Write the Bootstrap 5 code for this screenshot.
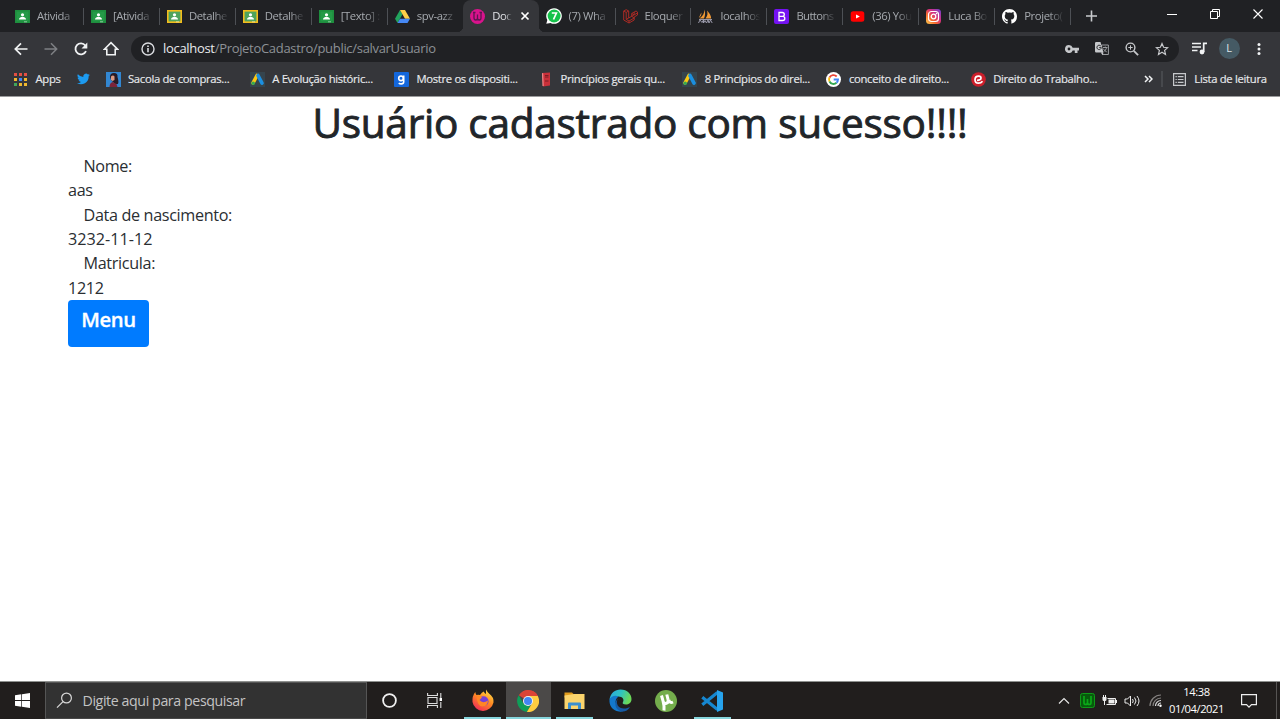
<!DOCTYPE html>
<html lang="pt-BR">
<head>
<meta charset="utf-8">
<title>Document</title>
<meta name="viewport" content="width=device-width, initial-scale=1">
<link href="https://cdn.jsdelivr.net/npm/bootstrap@5.3.0/dist/css/bootstrap.min.css" rel="stylesheet">
<style>
body{font-family:"Open Sans","Noto Sans",sans-serif;height:719px;overflow:hidden;font-size:16px;background:#fff}
svg{display:block;flex:none}
.strip{height:32px;background:#202124;padding-left:7.5px}
.tabx{width:75.95px;height:32px;padding-left:7.5px;gap:7px;color:#a6aaaf;font-size:11.3px;letter-spacing:-.4px;flex:none;position:relative}
.tabx::after{content:"";position:absolute;right:-.5px;top:8px;width:1px;height:17px;background:#4d5055}
.tabx.on::after,.tabx.pre::after{display:none}
.tabx.on{background:#35363a;border-radius:8px 8px 0 0;color:#dfe1e5;padding-left:7px}
.tabx.on::before{content:"";position:absolute;left:-6px;right:-6px;bottom:0;height:6px;background:radial-gradient(circle at 0 0,#0000 6px,#35363a 6.5px) left/6px 6px no-repeat,radial-gradient(circle at 100% 0,#0000 6px,#35363a 6.5px) right/6px 6px no-repeat}
.tname{width:42px;white-space:nowrap;-webkit-mask-image:linear-gradient(90deg,#000 60%,transparent 96%);mask-image:linear-gradient(90deg,#000 60%,transparent 96%)}
.on .tname{width:21px}
.on .tname+svg{margin-left:-.5px}
.wbtn{width:43.4px;height:27px}
.tools{height:33px;background:#35363a;padding-left:5.5px}
.cell30{width:30px;height:26px;display:flex;align-items:center;justify-content:center;flex:none}
.omni{width:1048px;height:26px;border-radius:13px;background:#202124;margin-left:5.5px;padding-left:9.5px;padding-right:2px;font-size:13px;letter-spacing:-.31px;color:#8d9196}
.omni b{font-weight:400;color:#e8eaed}
.avatar{width:21px;height:21px;border-radius:50%;background:#455a64;color:#dfe5e8;font-size:11px}
.marks{height:31px;background:#35363a;font-size:11.3px;letter-spacing:-.32px;color:#e8eaed;white-space:nowrap;-webkit-text-stroke:.15px #e8eaed;padding-bottom:3px}
.bm{width:144.2px;gap:7.5px;flex:none}
.page{height:585px;border-top:1px solid #9a9b9d;color:#212529;padding:1px 68px 0}
.page h1{font-size:40.5px;font-weight:400;line-height:48.6px;margin:0 0 7.5px;padding-top:1px;height:48.6px;text-align:center;letter-spacing:-.24px;-webkit-text-stroke:.9px #212529}
.page .ln{line-height:24.33px;font-size:16.2px;font-weight:400;letter-spacing:-.35px;color:#2a2e32}
.page .num{letter-spacing:0}
.page .lb{padding-left:15.5px}
.menub{background:#007bff;border:0;border-radius:4px;width:81px;height:47px;padding:0 0 7px;margin-top:-.5px;color:#fff;font-size:20.3px;font-weight:600;letter-spacing:-.4px;display:flex;align-items:center;justify-content:center;-webkit-text-stroke:.3px #fff}
.task{height:38px;background:#211e1d;border-top:1px solid #8f918f;color:#fff}
.cell45{width:45px;height:37px;display:flex;align-items:center;justify-content:center;flex:none;position:relative}
.find{width:322px;height:37px;background:#323232;border:1px solid #555;border-bottom-color:#484848;padding-left:10px;gap:9.5px;font-size:14.2px;letter-spacing:-.4px;color:#c4c4c4}
.apps{gap:.95px;margin-left:3px}
.run::after{content:"";position:absolute;left:4px;right:4px;bottom:0;height:2px;background:#86d5dc}
.front{background:#4b4948}
.front::after{left:0;right:0}
.tray .ic{width:22.7px;display:flex;justify-content:center}
.clock{width:60px;font-size:11.2px;line-height:16.5px;letter-spacing:-.45px;text-align:center}
</style>
</head>
<body>
<svg width="0" height="0" class="position-absolute">
<defs>
<linearGradient id="ig" x1="0" y1="1" x2="1" y2="0"><stop offset="0" stop-color="#ffd04f"/><stop offset=".35" stop-color="#f5672f"/><stop offset=".6" stop-color="#d62f7f"/><stop offset="1" stop-color="#6a45d8"/></linearGradient>
<linearGradient id="ff" x1=".8" y1="0" x2=".2" y2="1"><stop offset="0" stop-color="#ffe14a"/><stop offset=".45" stop-color="#ff8a22"/><stop offset="1" stop-color="#f0255c"/></linearGradient>
<linearGradient id="ed" x1="0" y1="0" x2="1" y2=".3"><stop offset="0" stop-color="#2aa5e0"/><stop offset=".55" stop-color="#2fc3c0"/><stop offset="1" stop-color="#6bd958"/></linearGradient>
<symbol id="room" viewBox="0 0 15 13"><path fill="currentColor" d="M0 0h15v13H0z"/><path fill="var(--in)" d="M1.6 1.6h11.8v9.8H1.6z"/><circle cx="7.5" cy="4.8" r="1.6" fill="#fff"/><path d="M4 9.4c0-2 2-2.5 3.500-2.500s3.500.5 3.500 2.500z" fill="#fff"/><path d="M9 11.300h3v1H9z" fill="#fff" opacity=".5"/></symbol>
<symbol id="ads" viewBox="0 0 15 15"><path fill="#35444d" d="M0 0h15v15H0z"/><path d="M7 3.500 3 11" stroke="#fbc812" stroke-width="3.600" stroke-linecap="round"/><path d="m8 3.500 4 7.700" stroke="#1b8fe0" stroke-width="3.600" stroke-linecap="round"/><circle cx="3.200" cy="11.300" r="1.800" fill="#35a853"/></symbol>
</defs></svg>

<header>
<div class="strip d-flex">
 <div class="tabx d-flex align-items-center"><svg width="15" height="13" style="color:#1e8e3e;--in:#249a47"><use href="#room"/></svg><span class="tname">Ativida</span></div>
 <div class="tabx d-flex align-items-center"><svg width="15" height="13" style="color:#1e8e3e;--in:#249a47"><use href="#room"/></svg><span class="tname">[Ativida</span></div>
 <div class="tabx d-flex align-items-center"><svg width="15" height="13" style="color:#f3bd1d;--in:#4fa35c"><use href="#room"/></svg><span class="tname">Detalhe</span></div>
 <div class="tabx d-flex align-items-center"><svg width="15" height="13" style="color:#f3bd1d;--in:#4fa35c"><use href="#room"/></svg><span class="tname">Detalhe</span></div>
 <div class="tabx d-flex align-items-center"><svg width="15" height="13" style="color:#1e8e3e;--in:#249a47"><use href="#room"/></svg><span class="tname">[Texto] :</span></div>
 <div class="tabx pre d-flex align-items-center"><svg width="15" height="13" viewBox="0 0 15 13"><path fill="#22a45d" d="M5 0 0 8.700 2.500 13 7.500 4.300z"/><path fill="#ffcf48" d="M5 0h5l5 8.700h-5z"/><path fill="#4688f4" d="M2.500 13 5 8.700h10L12.500 13z"/></svg><span class="tname">spv-azz</span></div>
 <div class="tabx on d-flex align-items-center"><svg width="15" height="15" viewBox="0 0 15 15"><circle cx="7.500" cy="7.500" r="7.500" fill="#d9138c"/><path d="M4 3.500v5.300q0 2.200 1.800 2.200 1.700 0 1.700-2.200V5.500v3.300q0 2.200 1.700 2.200Q11 11 11 8.800V3.500M3 3.500h2.500m4 0H12" fill="none" stroke="#5e1450" stroke-width="1.300"/></svg><span class="tname">Doc</span>
 <svg width="10" height="10" viewBox="0 0 10 10"><path d="m1.500 1.500 7 7m0-7-7 7" stroke="#fff" stroke-width="1.700"/></svg></div>
 <div class="tabx d-flex align-items-center" style="padding-left:6.5px"><svg width="16" height="16" viewBox="0 0 16 16"><path fill="#fff" d="M.3 15.800 1.300 12A7.800 7.800 0 1 1 4.500 15z"/><circle cx="8.100" cy="8" r="6.500" fill="#16c24b"/><path d="M5.800 5h4.600L7.500 11.500" fill="none" stroke="#fff" stroke-width="1.700"/></svg><span class="tname">(7) Wha</span></div>
 <div class="tabx d-flex align-items-center"><svg width="15" height="15" viewBox="0 0 15 15" fill="none" stroke="#a92b25" stroke-width="1"><path d="M.7 2 3.200.7 5.700 2v7l5.500-3.200V3L13 2l1.500 1v3L11.200 8v3L6 14 .7 11zM.7 2l2.500 1.400L5.700 2M3.200 3.400v7L6 12l5.200-3M5.700 9 3.200 10.400M6 12v2M8.700 4.500l2.500 1.300L14.500 4M8.700 4.500V7.400m0-2.900L11.200 3M8.700 7.400 11.200 8.800"/></svg><span class="tname">Eloquer</span></div>
 <div class="tabx d-flex align-items-center"><svg width="15" height="15" viewBox="0 0 15 15"><path fill="#f29a35" d="M6.500.5C7.500 4 7 7 6 9.500H1.500C4.500 7.500 6.500 4.500 6.500.5zM9 1.500c2.500 2.500 4 5 4.200 8H7.500C9.500 7 10 4.500 9 1.500zM3.300 3.500c.5 2-.5 4-2.500 5.500z"/><path d="M.5 14 2 11l2 2.500L5.500 11v3L7 11.500 8.500 14l1.500-3 1 3 1.500-3 1.700 3M1 10.500h13" fill="none" stroke="#a5a4b5" stroke-width=".9"/></svg><span class="tname">localhos</span></div>
 <div class="tabx d-flex align-items-center"><svg width="15" height="15" viewBox="0 0 15 15"><rect width="15" height="15" rx="2" fill="#7412f2"/><path d="M5 3.500h3.200q2.100 0 2.100 1.900T8.200 7.300H5zm0 3.800h3.600q2.200 0 2.200 2.100t-2.200 2.100H5z" fill="none" stroke="#fff" stroke-width="1.300"/></svg><span class="tname" style="letter-spacing:-.6px">Buttons</span></div>
 <div class="tabx d-flex align-items-center"><svg width="15" height="15" viewBox="0 0 15 15"><rect x=".7" y="2.300" width="13.600" height="10.400" rx="2.500" fill="#f00"/><path fill="#fff" d="m6 5.400 3.900 2.100L6 9.600z"/></svg><span class="tname">(36) You</span></div>
 <div class="tabx d-flex align-items-center"><svg width="15" height="15" viewBox="0 0 15 15"><rect width="15" height="15" rx="3.500" fill="url(#ig)"/><rect x="2.500" y="2.500" width="10" height="10" rx="3" fill="none" stroke="#fff" stroke-width="1.200"/><circle cx="7.500" cy="7.500" r="2.300" fill="none" stroke="#fff" stroke-width="1.300"/><circle cx="10.500" cy="4.600" r=".8" fill="#fff"/></svg><span class="tname">Luca Bo</span></div>
 <div class="tabx d-flex align-items-center"><svg width="15" height="15" viewBox="0 0 16 16"><path fill="#fff" d="M8 0C3.580 0 0 3.580 0 8c0 3.540 2.290 6.530 5.470 7.590.4.070.55-.17.55-.38 0-.19-.010-.82-.010-1.490-2.010.37-2.530-.49-2.690-.94-.09-.23-.48-.94-.82-1.130-.28-.15-.68-.52-.010-.53.63-.010 1.080.58 1.230.82.72 1.210 1.870.87 2.330.66.070-.52.28-.87.51-1.070-1.780-.2-3.640-.89-3.640-3.950 0-.87.31-1.590.82-2.150-.08-.2-.36-1.020.08-2.120 0 0 .67-.21 2.200.82a7.600 7.600 0 0 1 4 0c1.530-1.040 2.200-.82 2.200-.82.44 1.100.16 1.920.08 2.120.51.56.82 1.270.82 2.150 0 3.070-1.870 3.750-3.650 3.950.29.25.54.73.54 1.480 0 1.070-.010 1.930-.010 2.200 0 .21.15.46.55.38A8 8 0 0 0 16 8c0-4.420-3.580-8-8-8"/></svg><span class="tname">Projeto(</span></div>
 <svg class="mt-2" style="margin-left:14px" width="13" height="16" viewBox="0 0 13 16"><path d="M6.500 2.500v11M1 8h11" stroke="#c8cacd" stroke-width="1.600"/></svg>
 <div class="d-flex ms-auto">
  <div class="wbtn d-flex align-items-center justify-content-center"><svg width="10" height="10"><path d="M0 5.500h10" stroke="#fff"/></svg></div>
  <div class="wbtn d-flex align-items-center justify-content-center"><svg width="10" height="10" fill="none" stroke="#fff"><path d="M.5 2.500h7v7h-7zM2.500 2.500v-2h7v7h-2"/></svg></div>
  <div class="wbtn d-flex align-items-center justify-content-center"><svg width="10" height="10"><path d="m.5.5 9 9m0-9-9 9" stroke="#fff" stroke-width="1.100"/></svg></div>
 </div>
</div>

<div class="tools d-flex align-items-center">
 <div class="cell30"><svg width="14" height="14" viewBox="0 0 14 14" fill="none" stroke="#f1f3f4" stroke-width="1.700"><path d="M13.500 7H1.500M7 1.300 1.300 7 7 12.700"/></svg></div>
 <div class="cell30"><svg width="14" height="14" viewBox="0 0 14 14" fill="none" stroke="#7e8084" stroke-width="1.500"><path d="M.5 7h12M7 1.300 12.700 7 7 12.700"/></svg></div>
 <div class="cell30"><svg width="14" height="14" viewBox="0 0 14 14"><path d="M12 9.200A5.500 5.500 0 1 1 11.300 3.500L12 4.500" fill="none" stroke="#f1f3f4" stroke-width="1.800"/><path fill="#f1f3f4" d="M13.300.6v6H7.500z"/></svg></div>
 <div class="cell30"><svg width="16" height="15" viewBox="0 0 16 15"><path d="M1.400 8.200 8 1.600l6.600 6.600h-2.400v5.500H3.800V8.200z" fill="none" stroke="#f1f3f4" stroke-width="1.600"/></svg></div>
 <div class="omni d-flex align-items-center">
  <svg width="14" height="14" viewBox="0 0 14 14"><circle cx="7" cy="7" r="6" fill="none" stroke="#dadce0" stroke-width="1.400"/><path d="M7 6v4.300M7 3.400v1.500" stroke="#dadce0" stroke-width="1.600"/></svg>
  <span style="margin-left:8.5px"><b>localhost</b>/ProjetoCadastro/public/salvarUsuario</span>
  <div class="d-flex ms-auto">
   <div class="cell30"><svg width="14" height="8" viewBox="0 0 14 8"><path fill="#c6c8cb" fill-rule="evenodd" d="M4 0a4 4 0 1 0 3.700 5.400H9.800V8h2.700V5.400H14V2.700H7.700A4 4 0 0 0 4 0m0 2.600a1.400 1.400 0 1 1 0 2.800 1.400 1.400 0 0 1 0-2.800"/></svg></div>
   <div class="cell30"><svg width="14" height="14" viewBox="0 0 14 14"><path d="M6.500 3H13.400v9.500H7.500z" fill="#202124" stroke="#9b9da0"/><path d="M8 5.500h4.500M10.300 4.500v1m1.200 0c-.3 2-1.500 3.500-3 4.300m0-3c.7 1.400 1.600 2.400 3.200 3" stroke="#9b9da0" fill="none"/><path fill="#c6c8cb" d="M0 1.200Q0 0 1.200 0h4.300l2.800 10.500H1.200Q0 10.500 0 9.300zM6 10.700h2.500l-1 2.600z"/><path d="M5.800 4A2.200 2.200 0 1 0 6.300 5.600H4.200" fill="none" stroke="#303134"/></svg></div>
   <div class="cell30"><svg width="14" height="14" viewBox="0 0 14 14" fill="none" stroke="#c6c8cb"><circle cx="5.500" cy="5.500" r="4.400" stroke-width="1.400"/><path d="m8.800 8.800 4.300 4.300" stroke-width="1.800"/><path d="M3.300 5.500h4.400M5.500 3.300v4.400"/></svg></div>
   <div class="cell30"><svg width="14" height="14" viewBox="0 0 14 14"><path d="m7 1.600 1.600 3.700 4 .4-3 2.700.9 4L7 10.300l-3.500 2.100.9-4-3-2.700 4-.4z" fill="none" stroke="#c6c8cb" stroke-width="1.200"/></svg></div>
  </div>
 </div>
 <div class="cell30" style="margin-left:5px"><svg width="15" height="13" viewBox="0 0 15 13"><path d="M0 1.500h9M0 5h9M0 8.500h5.500" stroke="#f1f3f4" stroke-width="1.600"/><path d="M11.700 10V1.300H15" fill="none" stroke="#f1f3f4" stroke-width="1.700"/><circle cx="10" cy="10" r="2.400" fill="#f1f3f4"/></svg></div>
 <div class="cell30"><span class="avatar d-flex align-items-center justify-content-center">L</span></div>
 <div class="cell30"><svg width="4" height="14" fill="#f1f3f4"><circle cx="2" cy="2.500" r="1.500"/><circle cx="2" cy="7" r="1.500"/><circle cx="2" cy="11.500" r="1.500"/></svg></div>
</div>

<div class="marks d-flex align-items-center">
 <svg style="margin-left:14px" width="13" height="13" viewBox="0 0 13 13"><path d="M0 1.500h13" stroke="#e34f43" stroke-width="3" stroke-dasharray="3 2"/><path d="M0 6.500h3M10 6.500h3" stroke="#f3b62c" stroke-width="3"/><path d="M5 6.500h3" stroke="#4285f4" stroke-width="3"/><path d="M0 11.500h3" stroke="#42a75b" stroke-width="3"/><path d="M5 11.500h8" stroke="#efb830" stroke-width="3" stroke-dasharray="3 2"/></svg>
 <span style="width:41.5px;padding-left:8.5px">Apps</span>
 <svg style="margin:0 16px 0 8px" width="13" height="12" viewBox="0 0 24 20"><path fill="#1d9bf0" d="M24 2.400a10 10 0 0 1-2.800.8A5 5 0 0 0 23.300.5a10 10 0 0 1-3.100 1.200A4.900 4.900 0 0 0 11.800 6.200 14 14 0 0 1 1.700 1a4.900 4.900 0 0 0 1.500 6.600A5 5 0 0 1 1 7a4.900 4.900 0 0 0 4 4.900 5 5 0 0 1-2.300.1 4.900 4.900 0 0 0 4.600 3.400A10 10 0 0 1 0 17.500 14 14 0 0 0 21.500 5z"/></svg>
 <div class="bm d-flex align-items-center"><svg width="15" height="15" viewBox="0 0 15 15"><path fill="#3287d2" d="M0 0h15v15H0z"/><path fill="#271b26" d="M4 5q0-4 4-4t3.500 4q1.500 5 .5 7H9L5 8z"/><path fill="#d99a82" d="M5 4.500q2-2 3.500 0V8L6.500 9 5 8z"/><path fill="#7b2439" d="M3.500 15q0-4 3-5l4 2 1 3z"/></svg>Sacola de compras...</div>
 <div class="bm d-flex align-items-center"><svg width="15" height="15"><use href="#ads"/></svg>A Evolução históric...</div>
 <div class="bm d-flex align-items-center"><svg width="15" height="15" viewBox="0 0 15 15"><rect width="15" height="15" rx="1" fill="#1367dc"/><circle cx="7" cy="6.300" r="2.300" fill="none" stroke="#fff" stroke-width="1.600"/><path d="M9.700 3.500v6.200q0 2.200-2.500 2.200-1.500 0-2.500-.7" fill="none" stroke="#fff" stroke-width="1.600"/></svg>Mostre os dispositi...</div>
 <div class="bm d-flex align-items-center"><svg width="15" height="15" viewBox="0 0 15 15"><path fill="#c9303a" d="m4 1 8-.5v13L5 14.500z"/><path fill="#f08d8d" d="m4 1 1.200.5.500 12.500L4.500 14z"/><path d="M7 3.500h3.500M7 5h3.500M7 9h3.500" stroke="#661a20" stroke-width=".8"/></svg>Princípios gerais qu...</div>
 <div class="bm d-flex align-items-center"><svg width="15" height="15"><use href="#ads"/></svg>8 Princípios do direi...</div>
 <div class="bm d-flex align-items-center"><svg width="15" height="15" viewBox="0 0 15 15" fill="none" stroke-width="1.900"><circle cx="7.500" cy="7.500" r="7.500" fill="#fff"/><path d="M10.700 4.500A4.500 4.500 0 0 0 3.500 5.500" stroke="#ea4335"/><path d="M3.500 5.500a4.500 4.500 0 0 0 0 4" stroke="#fbbc05"/><path d="M3.500 9.500a4.500 4.500 0 0 0 7 1.300" stroke="#34a853"/><path d="M10.500 10.800A4.500 4.500 0 0 0 12 7.500H7.700" stroke="#4285f4"/></svg>conceito de direito...</div>
 <div class="bm d-flex align-items-center"><svg width="15" height="15" viewBox="0 0 15 15"><circle cx="7.500" cy="7.500" r="7.300" fill="#cc1f2b"/><path d="M6 8.300q4 0 4-2.300 0-1.800-2.300-1.800Q4 4.200 4 7.800q0 3.400 3.500 3.400 2.500 0 4-2" fill="none" stroke="#fff" stroke-width="1.700"/></svg>Direito do Trabalho...</div>
 <svg style="margin-left:29px" width="9" height="8" viewBox="0 0 9 8"><path d="m1 1 3 3-3 3m4-6 3 3-3 3" fill="none" stroke="#f1f3f4" stroke-width="1.500"/></svg>
 <svg style="margin-left:8px" width="2" height="16"><path d="M1 0v16" stroke="#5b5d61"/></svg>
 <svg style="margin:0 8px 0 10.5px" width="13" height="13" viewBox="0 0 13 13"><path d="M.6.600h11.800v11.800H.6z" fill="none" stroke="#c6c8cb" stroke-width="1.200"/><path d="M2.500 3.700h1.300m1 0h5.700M2.500 6.500h1.300m1 0h5.700M2.500 9.300h1.300m1 0h5.700" stroke="#c6c8cb" stroke-width="1.200"/></svg>
 <span>Lista de leitura</span>
</div>
</header>

<main class="page">
 <h1>Usuário cadastrado com sucesso!!!!</h1>
 <div class="ln lb">Nome:</div>
 <div class="ln">aas</div>
 <div class="ln lb">Data de nascimento:</div>
 <div class="ln num">3232-11-12</div>
 <div class="ln lb">Matricula:</div>
 <div class="ln">1212</div>
 <button class="menub">Menu</button>
</main>

<footer class="task d-flex">
 <div class="cell45"><svg width="15" height="15" viewBox="0 0 15 15"><path fill="#fff" d="M0 2.200 6.300 1.300v5.800H0zM7 1.200 15 0v7.100H7zM0 7.900h6.300v5.800L0 12.800zM7 7.900h8V15L7 13.800z"/></svg></div>
 <div class="find d-flex align-items-center"><svg width="17" height="17" viewBox="0 0 17 17" fill="none" stroke="#d8d8d8" stroke-width="1.200"><circle cx="10.500" cy="6" r="4.900"/><path d="M7 9.700 1 15.700"/></svg>Digite aqui para pesquisar</div>
 <div class="cell45"><svg width="15" height="15"><circle cx="7.500" cy="7.500" r="6.400" fill="none" stroke="#f1f1f1" stroke-width="1.800"/></svg></div>
 <div class="cell45"><svg width="16" height="15" viewBox="0 0 16 15" fill="none" stroke="#ddd" stroke-width="1.100"><path d="M1 4.500h9v6H1zM.6 0v2.500h9.800V0M.6 15v-2.500h9.800V15M13.800 0v5M13.800 9v6"/><path d="M12.600 5h2.400v3h-2.400z" fill="#fff" stroke="none"/></svg></div>
 <div class="apps d-flex">
  <div class="cell45 run"><svg width="22" height="23" viewBox="0 0 22 23"><path fill="url(#ff)" d="M14 .5q1 2 3 4 5 3.500 4.500 9A10.700 10.700 0 0 1 .5 13Q0 7 3.300 3q.2 2 1.200 3Q6 5.500 8 6q1.800-3 3.800-3.500.4 1.500 2.200 2.500z"/><circle cx="11.500" cy="12.200" r="5" fill="#7440d8"/><path fill="#ff8626" d="M4.500 8q3-2 5.500.5L7.500 11q3 4 8.500.5-.5 6-5.500 6T4.500 8z"/></svg></div>
  <div class="cell45 run front"><svg width="22" height="22" viewBox="0 0 22 22"><path fill="#db4437" d="M11 11 1.800 5.200A11 11 0 0 1 20.800 6z"/><path fill="#0f9d58" d="M1.700 5.300A11 11 0 0 0 9.800 22l5-8.700L11 11 6.500 13.500z"/><path fill="#ffcd40" d="M20.800 6A11 11 0 0 1 9.800 22l5.500-9L11 6z"/><path fill="#db4437" d="M6 5.500 11 6h9.800A11 11 0 0 0 6 1.200z"/><circle cx="11" cy="11" r="5" fill="#f1f1f1"/><circle cx="11" cy="11" r="4" fill="#4285f4"/></svg></div>
  <div class="cell45 run"><svg width="21" height="18" viewBox="0 0 21 18"><path fill="#e19b1c" d="M.5.500h7.500l2 2v3H.5z"/><path fill="#fbd46c" d="M.5 3.500 10 2h10.500v15H.5z"/><path fill="#3b8fd0" d="M4 17v-5.500q0-1 1-1h11q1 0 1 1V17h-3v-3.500H7V17z"/></svg></div>
  <div class="cell45"><svg width="23" height="23" viewBox="0 0 23 23"><path fill="url(#ed)" d="M.5 10.500C1.500 4 6 .5 11.500.5c7 0 11 5 11 9.500 0 4-3 5.500-5.500 5.500-3 0-4-1-3-2.500 1.500-2.500-.5-5.500-4.500-5.500-4 0-7.500 1.500-9 3z"/><path fill="#1478cc" d="M.5 10.500C2 7 6.500 6 9.500 7.500 7 9 6 12 7 15q2 6 9 6.500Q13 23 10 22.500C3 21.500 0 16 .5 10.500z"/><path fill="#165aa5" d="M9 9.500c-3 5 .5 10 6 10 2.500 0 4.500-.7 6-1.500-2 3.500-5 4.800-8 4.500-7-1-8.500-9-4-13z"/></svg></div>
  <div class="cell45"><svg width="22" height="22" viewBox="0 0 22 22"><circle cx="11" cy="11" r="11" fill="#74ad4c"/><path d="M6.500 5.500 8 10.800q.9 3.200 3.300 2.500 2.600-.8 1.700-4L11.800 4.500M13.800 10q1 3.500 4.200 2M8 10.800Q9.500 16 9 20.500" fill="none" stroke="#fff" stroke-width="3"/></svg></div>
  <div class="cell45 run"><svg width="22" height="22" viewBox="0 0 22 22"><path d="M1.300 7.300 16.500 19.500M1.300 14.700 16.500 2.500" stroke="#1687d0" stroke-width="3.200"/><path fill="#27a3ed" d="M16 0 22 2.500v17L16 22z"/></svg></div>
 </div>
 <div class="tray d-flex align-items-center ms-auto" style="margin-right:.5px">
  <div class="ic"><svg width="12" height="8"><path d="m1 6.500 5-5 5 5" fill="none" stroke="#e5e5e5" stroke-width="1.200"/></svg></div>
  <div class="ic"><svg width="15" height="15" viewBox="0 0 15 15"><rect x=".5" y=".5" width="14" height="14" rx="2" fill="#075a0c" stroke="#0e9b18"/><path d="M4 3v6.500q0 2 1.700 2 1.800 0 1.800-2V6v3.500q0 2 1.800 2 1.700 0 1.700-2V3" fill="none" stroke="#0aa818" stroke-width="1.700"/></svg></div>
  <div class="ic"><svg width="15" height="12" viewBox="0 0 15 12"><path d="M5.500 3.500h8v6h-9" fill="none" stroke="#eee"/><path fill="#eee" d="M6.500 4.500h6v4h-6zM14 5h1v3h-1zM.5 2h4v2.500q0 1.500-1.500 1.500v4H2V6Q.5 6 .5 4.500zM1 0h1v2H1zM3 0h1v2H3z"/></svg></div>
  <div class="ic"><svg width="17" height="14" viewBox="0 0 17 14" fill="none" stroke="#eee"><path d="M1 5h2.500L6.500 2v10L3.500 9H1zM8.500 5q1.500 2 0 4M10.500 3.500q3 3.500 0 7M13 2q4 5 0 10"/></svg></div>
  <div class="ic"><svg width="13" height="13" viewBox="0 0 13 13" fill="none" stroke-width="1.200"><path d="M1 12A11 11 0 0 1 12 1M4 12a8 8 0 0 1 8-8" stroke="#858280"/><path d="M6.500 12A5.500 5.500 0 0 1 12 6.500M9 12a3 3 0 0 1 3-3" stroke="#ddd"/><circle cx="11.500" cy="11.800" r="1.200" fill="#fff"/></svg></div>
  <div class="clock">14:38<br>01/04/2021</div>
  <svg style="margin:0 19px 0 14px" width="16" height="16" viewBox="0 0 16 16"><path d="M.6 1.600h14.800v10H10.500L8 14.200l-2.500-2.600H.6z" fill="none" stroke="#eee" stroke-width="1.200"/></svg>
  <svg width="4" height="37"><path d="M.5 0v37" stroke="#565453"/></svg>
 </div>
</footer>
<script src="https://cdn.jsdelivr.net/npm/bootstrap@5.3.0/dist/js/bootstrap.bundle.min.js"></script>
</body>
</html>
